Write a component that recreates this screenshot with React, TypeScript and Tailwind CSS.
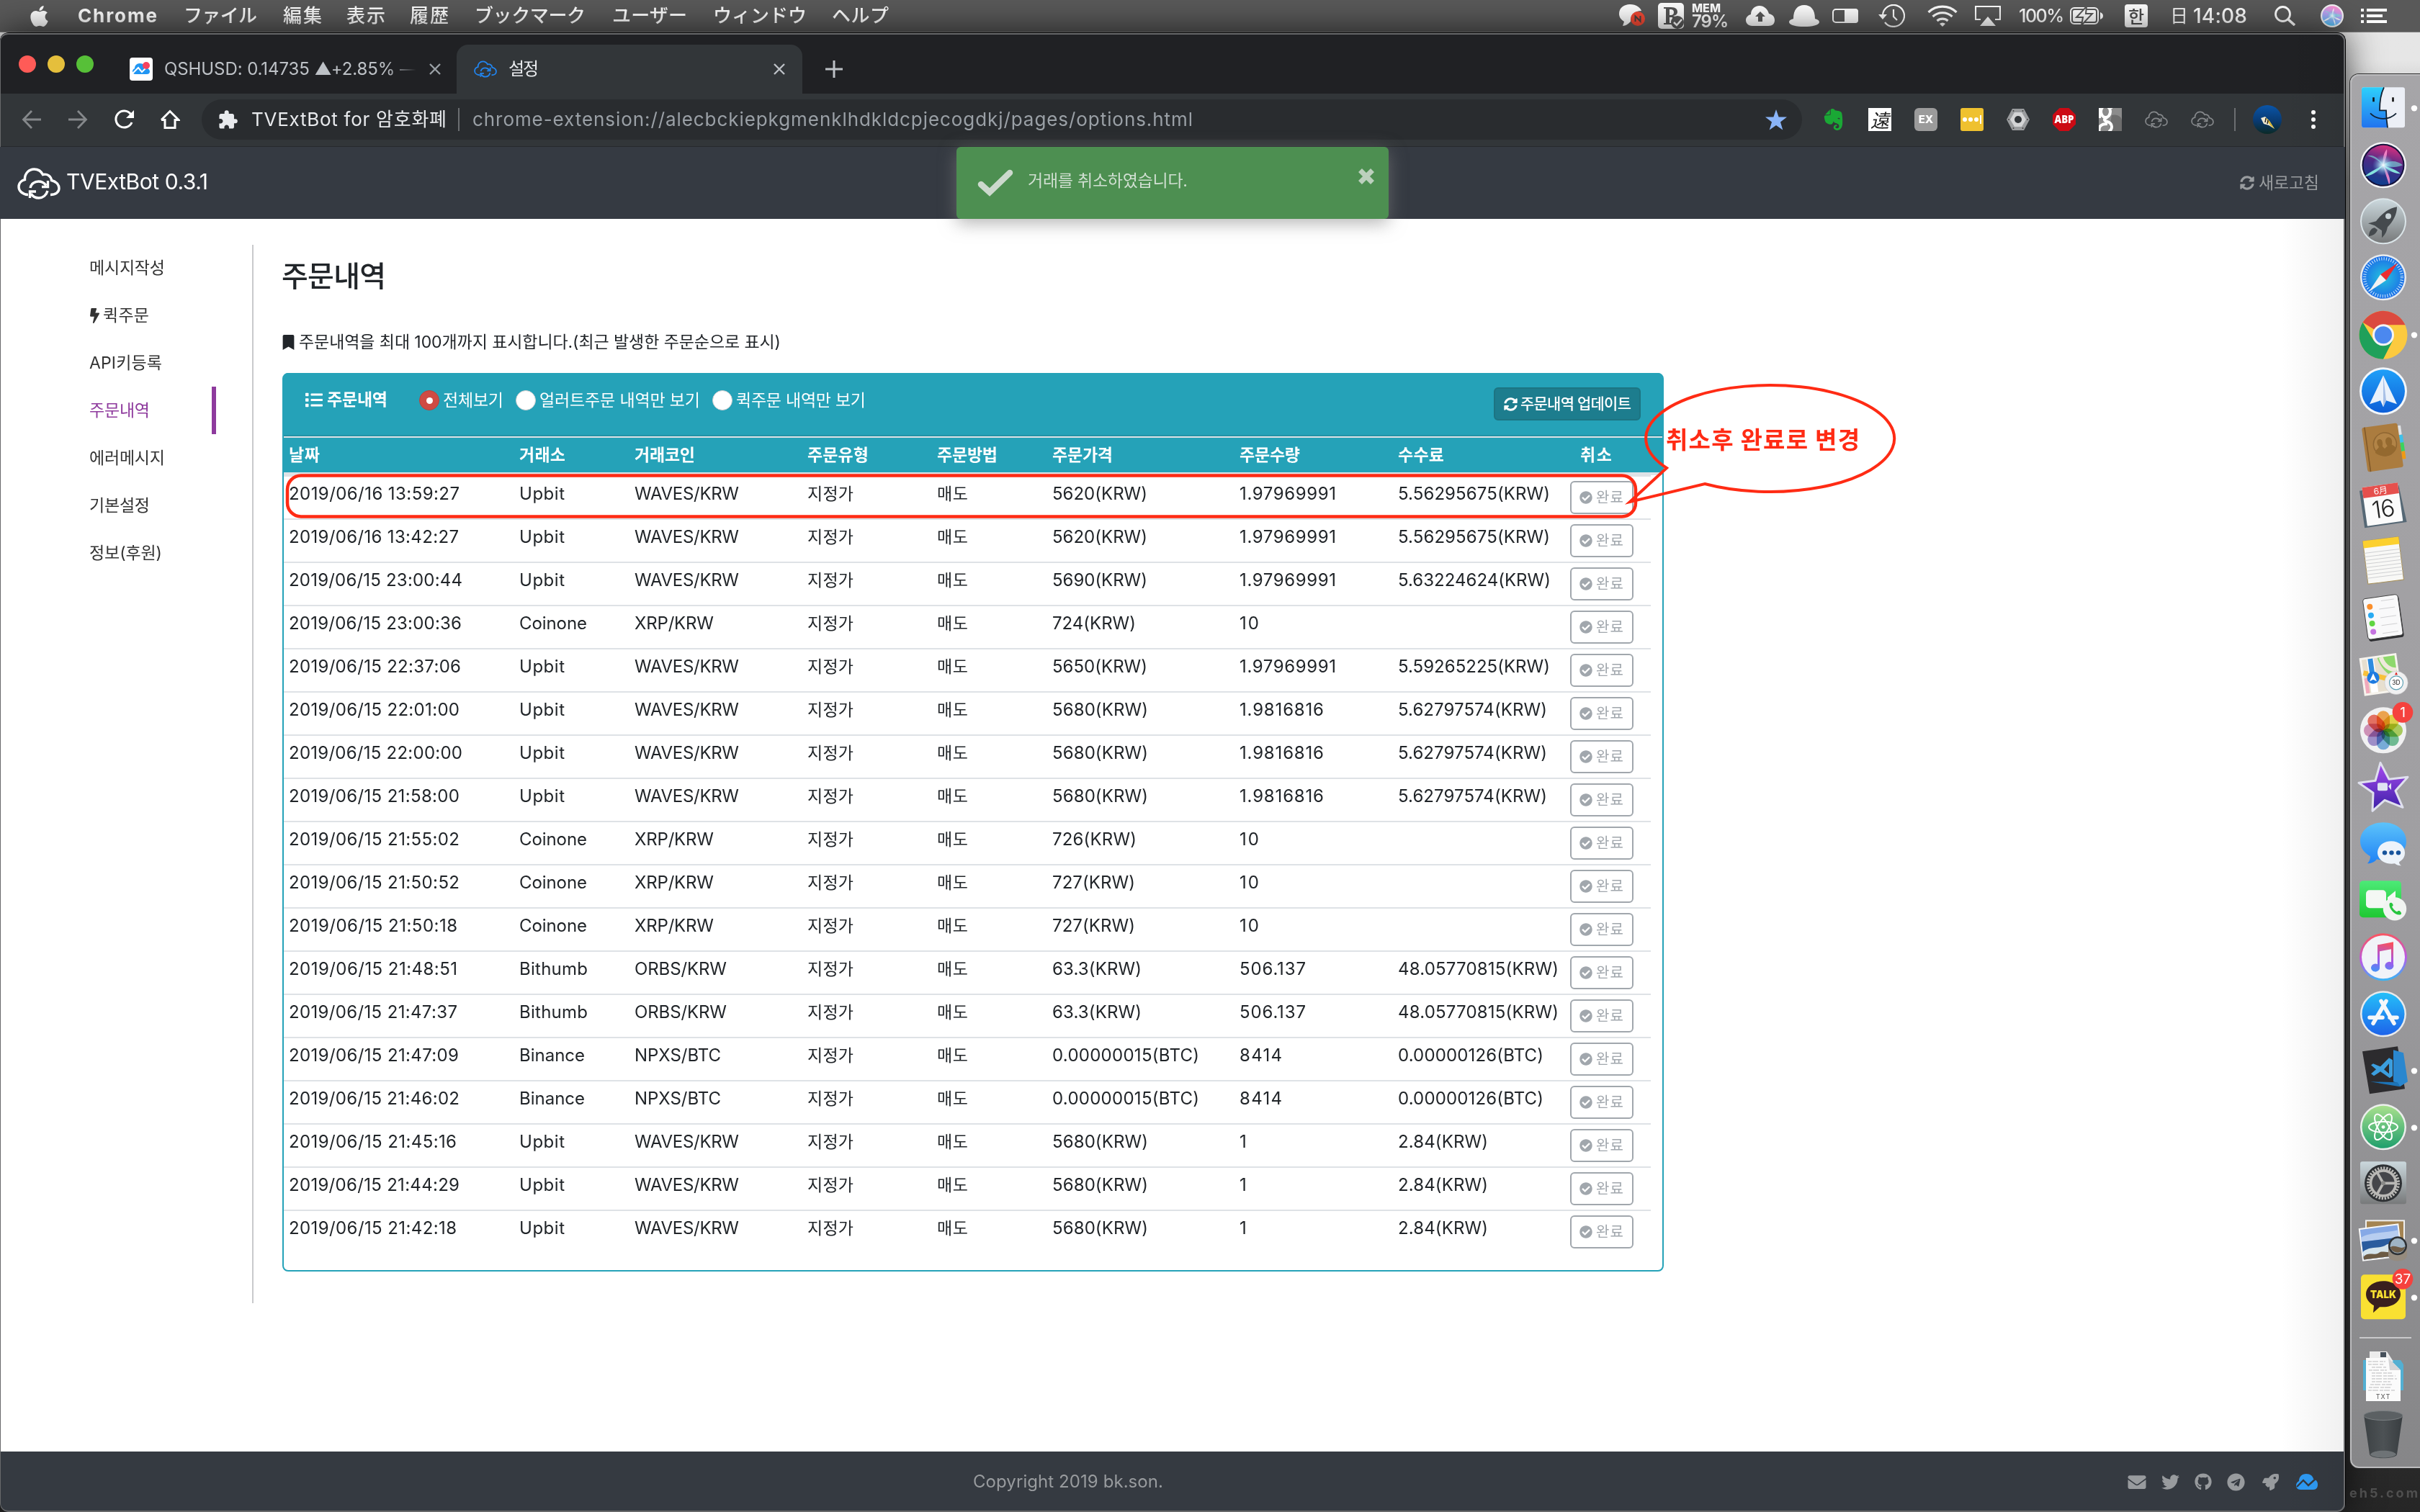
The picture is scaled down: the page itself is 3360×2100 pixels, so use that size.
import React, { useLayoutEffect, useRef, useState } from "react";
import {
  FaApple,
  FaBolt,
  FaBookmark,
  FaCheckCircle,
  FaEnvelope,
  FaEvernote,
  FaGithub,
  FaList,
  FaRocket,
  FaSyncAlt,
  FaTelegram,
  FaTwitter,
} from "react-icons/fa";
import { MdExtension } from "react-icons/md";

/** Text that is tracked so that its ink fills `w` pixels; one pixel on each side is the glyphs' own bearing. */
function Fit({ w, children, className = "" }: { w: number; children: string; className?: string }) {
  const ref = useRef<HTMLSpanElement>(null);
  const [spacing, setSpacing] = useState(0);
  useLayoutEffect(() => {
    const el = ref.current;
    if (!el) return;
    const natural = el.getBoundingClientRect().width;
    setSpacing((w + 2 - natural) / Math.max(1, children.length - 1));
  }, [w, children]);
  return (
    <span className={"inline-block shrink-0 -translate-x-px whitespace-pre " + className} style={{ width: w }}>
      <span ref={ref} style={{ letterSpacing: spacing }}>
        {children}
      </span>
    </span>
  );
}

function CloudLogo({ className, stroke = 2.4 }: { className: string; stroke?: number }) {
  return (
    <svg viewBox="0 0 60 44" className={className} fill="none" stroke="currentColor" strokeWidth={stroke} strokeLinecap="butt">
      <path d="M15 37.500C7 37 2 32 2 26.500C2 21 6 17.500 10.500 16.500C10 8 16 2 23.500 2C29 2 33 4.500 35.500 9.500C42 8 47 12 47.500 17.500C54 19 58 23.500 58 28.500C58 34 53 37.500 46 37.500" />
      <path d="M18 28C19 22.500 24 19 29.500 19C34 19 37.500 21 40 24.500M42.500 18V26.500H34" />
      <path d="M42 32C40.500 38 35.500 42 30 42C25.500 42 21.500 40 19 36M17.500 42V33H26" />
    </svg>
  );
}

function SiriBall({ id, light }: { id: string; light?: boolean }) {
  return (
    <g>
      <defs>
        <linearGradient id={id + "a"} x1="0.6" y1="0" x2="0.35" y2="1">
          <stop offset="0" stopColor={light ? "#ff8fd0" : "#d8307f"} />
          <stop offset="0.45" stopColor={light ? "#b9a3f5" : "#4a2a86"} />
          <stop offset="1" stopColor={light ? "#4cc3f7" : "#0d3f8e"} />
        </linearGradient>
        <radialGradient id={id + "b"}>
          <stop offset="0" stopColor="#fff" />
          <stop offset="0.3" stopColor="#bff6ff" stopOpacity="0.75" />
          <stop offset="1" stopColor="#5ad" stopOpacity="0" />
        </radialGradient>
      </defs>
      <circle r="32" fill="#f4f4f6" />
      <circle r="29.500" fill={light ? "#f4f4f6" : "#15123c"} />
      <circle r="27.500" fill={`url(#${id}a)`} />
      <path d="M0 0C-10 -14 -16 -14 -22 -13C-12 -10 -6 -6 0 0C8 -8 20 -6 27 0C18 4 10 3 0 0Z" fill="#7fe6e0" opacity="0.6" />
      <path d="M0 0C-6 4 -18 8 -26 16C-14 14 -6 8 0 0C8 4 18 6 24 12C16 12 6 8 0 0Z" fill={light ? "#fff" : "#8ff5e4"} opacity="0.9" />
      <path d="M0 0C2 10 6 20 8 27C12 22 6 8 0 0C4 -8 6 -16 5 -22C0 -16 -1 -8 0 0Z" fill={light ? "#fff" : "#ff8fd0"} opacity="0.85" />
      <circle r="15" fill={`url(#${id}b)`} />
    </g>
  );
}

const MENUS: [string, number, string][] = [
  ["ファイル", 100, "ml-[39px]"],
  ["編集", 52, "ml-[38px]"],
  ["表示", 52, "ml-[36px]"],
  ["履歴", 52, "ml-[36px]"],
  ["ブックマーク", 152, "ml-[38px]"],
  ["ユーザー", 102, "ml-[39px]"],
  ["ウィンドウ", 128, "ml-[38px]"],
  ["ヘルプ", 77, "ml-[37px]"],
];

function MenuBar() {
  return (
    <header className="flex h-[44px] shrink-0 items-center bg-[#595959] font-['Inter','Noto_Sans_CJK_JP',sans-serif] text-[26px] leading-[44px] text-white">
      <div className="flex w-[2248px] items-center">
        <FaApple className="ml-[39px] h-[33px] w-[31px]" />
        <Fit w={108} className="ml-[39px] font-bold">Chrome</Fit>
        {MENUS.map(([t, w, m]) => (
          <Fit key={t} w={w} className={"font-medium " + m}>{t}</Fit>
        ))}
      </div>
      <svg viewBox="0 0 36 32" className="h-[32px] w-[36px]">
        <path d="M15 0C24 0 30 5 31 9C22 9 15 15 16 24C13 27 9 30 5 30L7 24C2 21 0 17 0 13C0 5 7 0 15 0Z" fill="#fff" />
        <circle cx="26" cy="20" r="10" fill="#f44a35" />
        <path d="M22.500 24V16.500L29.500 23.500V16" fill="none" stroke="#444" strokeWidth="2" />
      </svg>
      <svg viewBox="0 0 36 36" className="ml-[18px] h-[36px] w-[36px]">
        <rect width="36" height="36" rx="5" fill="#fff" />
        <path d="M8 6H18C25 6 27 9 27 12.500C27 16 24 17.500 21 18C25 19 27 21 27 24V30H8V28H11V8H8ZM16 9V17H18C21 17 22 15 22 13C22 10 20 9 18 9ZM16 20V28H20V20Z" fill="#555" />
        <circle cx="27" cy="27" r="9" fill="#595959" />
        <path d="M22 27L26 31L33 23" fill="none" stroke="#fff" strokeWidth="2.500" />
      </svg>
      <div className="ml-[12px] flex flex-col">
        <Fit w={38} className="text-[16px] leading-[15px] font-extrabold">MEM</Fit>
        <Fit w={49} className="text-[24px] leading-[21px] font-semibold">79%</Fit>
      </div>
      <svg viewBox="0 0 40 28" className="ml-[25px] h-[28px] w-[40px]">
        <path d="M9 28C3 28 0 24 0 20C0 16 3 13 7 12C7 5 12 0 19 0C25 0 30 4 32 11C37 12 40 15 40 20C40 25 37 28 31 28Z" fill="#fff" />
        <path d="M20 8L27 15H23V22H17V15H13Z" fill="#595959" />
      </svg>
      <svg viewBox="0 0 42 30" className="ml-[20px] h-[30px] w-[42px]">
        <path d="M21 0C30 0 36 6 36 19C39 20 42 21 42 24C41 28 32 30 21 30S1 28 0 24C0 21 3 20 6 19C6 6 12 0 21 0Z" fill="#fff" />
      </svg>
      <svg viewBox="0 0 36 20" className="ml-[18px] h-[20px] w-[36px]">
        <rect x="1" y="1" width="34" height="18" rx="4" fill="none" stroke="#fff" strokeWidth="2" />
        <path d="M17 0H32A4 4 0 0 1 36 4V16A4 4 0 0 1 32 20H17Z" fill="#fff" />
      </svg>
      <svg viewBox="0 0 37 32" className="ml-[28px] h-[32px] w-[37px]" fill="none" stroke="#fff" strokeWidth="2.200">
        <path d="M6 15A15 15 0 1 1 9 25" />
        <path d="M0 14H12L6 21Z" fill="#fff" stroke="none" />
        <path d="M21 7V17L26 22" />
      </svg>
      <svg viewBox="0 0 42 30" className="ml-[31px] h-[30px] w-[42px]" fill="none" stroke="#fff" strokeWidth="3.200">
        <path d="M1.500 10A28 28 0 0 1 40.500 10M7.500 16A20 20 0 0 1 34.500 16M13.500 22A11.500 11.500 0 0 1 28.500 22" />
        <path d="M17 26A6 6 0 0 1 25 26L21 30Z" fill="#fff" stroke="none" />
      </svg>
      <svg viewBox="0 0 36 28" className="ml-[24px] h-[28px] w-[36px]">
        <path d="M8 19H1V1H35V19H28" fill="none" stroke="#fff" strokeWidth="2.200" />
        <path d="M18 15L29 28H7Z" fill="#fff" />
      </svg>
      <Fit w={61} className="ml-[26px] text-[25px] font-medium">100%</Fit>
      <svg viewBox="0 0 46 26" className="ml-[9px] h-[26px] w-[46px]">
        <rect x="1" y="2" width="38" height="22" rx="5" fill="none" stroke="#fff" strokeWidth="2" />
        <rect x="4" y="5" width="32" height="16" rx="2" fill="#fff" />
        <path d="M42 8C45 9 46 11 46 13S45 17 42 18Z" fill="#fff" />
        <path d="M23 0L9 15H18L16 26L31 10H22Z" fill="#fff" stroke="#595959" strokeWidth="2" />
      </svg>
      <span className="ml-[30px] flex h-[32px] w-[32px] items-center justify-center rounded-[4px] bg-white font-['Noto_Sans_CJK_KR',sans-serif] text-[24px] leading-[30px] font-medium text-[#4d4d4d]">한</span>
      <Fit w={19} className="ml-[32px] text-[25px]">日</Fit>
      <Fit w={73} className="ml-[13px] text-[28px] font-medium">14:08</Fit>
      <svg viewBox="0 0 29 28" className="ml-[39px] h-[28px] w-[29px]" fill="none" stroke="#fff" strokeWidth="2.800">
        <circle cx="11.500" cy="11.500" r="10" />
        <path d="M18.500 18.500L28 27" strokeWidth="3.600" />
      </svg>
      <svg viewBox="-32 -32 64 64" className="ml-[35px] h-[32px] w-[32px]">
        <SiriBall id="menusiri" light />
      </svg>
      <svg viewBox="0 0 36 20" className="ml-[24px] h-[20px] w-[36px]" fill="#fff">
        <path d="M0 0H4V4H0ZM8 0H36V4H8ZM0 8H4V12H0ZM8 8H30V12H8ZM0 16H4V20H0ZM8 16H36V20H8Z" />
      </svg>
    </header>
  );
}

function CrossIcon({ className }: { className: string }) {
  return (
    <svg viewBox="0 0 16 16" className={"h-[16px] w-[16px] shrink-0 " + className} stroke="currentColor" strokeWidth="2.400" fill="none">
      <path d="M1 1L15 15M15 1L1 15" />
    </svg>
  );
}

function TabStrip() {
  return (
    <div className="flex h-[84px] items-end bg-[#202124] font-['Inter','Noto_Sans_CJK_KR',sans-serif]">
      <div className="flex h-[68px] w-[634px] items-center">
        <div className="mb-[14px] ml-[26px] flex gap-[16px]">
          <i className="h-[24px] w-[24px] rounded-full bg-[#ff5b57]" />
          <i className="h-[24px] w-[24px] rounded-full bg-[#e5bf3c]" />
          <i className="h-[24px] w-[24px] rounded-full bg-[#57c038]" />
        </div>
        <svg viewBox="0 0 32 32" className="ml-[50px] h-[32px] w-[32px]">
          <rect width="32" height="32" rx="4" fill="#fff" />
          <path d="M8 23C5 23 4 21 4 19S5 16 7 15C7 11 10 8 14 8C19 8 22 11 23 14C26 15 28 17 28 19.500C28 22 26 23 24 23Z" fill="#2196f3" />
          <path d="M4 22L12 14L17 20L24 13" fill="none" stroke="#fff" strokeWidth="2" />
          <circle cx="23" cy="11" r="5" fill="#f6435f" />
        </svg>
        <span className="ml-[17px] flex [mask-image:linear-gradient(to_right,black_88%,transparent)]">
          <Fit w={349} className="text-[24px] leading-[32px] text-[#bdc1c6]">QSHUSD: 0.14735 ▲+2.85% —</Fit>
        </span>
        <CrossIcon className="ml-[18px] text-[#9aa0a6]" />
      </div>
      <div className="flex h-[68px] w-[480px] items-center rounded-t-[16px] bg-[#323639]">
        <CloudLogo className="ml-[24px] h-[24px] w-[32px] text-[#2185f0]" stroke={3.4} />
        <Fit w={40} className="ml-[17px] text-[24px] leading-[32px] text-[#e8eaed]">설정</Fit>
        <CrossIcon className="ml-[327px] text-[#bdc1c6]" />
      </div>
      <svg viewBox="0 0 24 24" className="mb-[22px] ml-[32px] h-[24px] w-[24px]" stroke="#bdc1c6" strokeWidth="3">
        <path d="M12 0V24M0 12H24" />
      </svg>
    </div>
  );
}

function Toolbar() {
  return (
    <div className="flex h-[74px] items-center border-b border-[#26292c] bg-[#323639] pb-[1px] font-['Inter','Noto_Sans_CJK_KR',sans-serif]">
      <svg viewBox="0 0 28 28" className="ml-[30px] h-[28px] w-[28px]" fill="none" stroke="#85888b" strokeWidth="2.800">
        <path d="M27 14H3M14 2L2.500 14L14 26" />
      </svg>
      <svg viewBox="0 0 28 28" className="ml-[36px] h-[28px] w-[28px]" fill="none" stroke="#85888b" strokeWidth="2.800">
        <path d="M1 14H25M14 2L25.500 14L14 26" />
      </svg>
      <svg viewBox="0 0 28 28" className="ml-[37px] h-[28px] w-[28px]" fill="none" stroke="#fff" strokeWidth="3">
        <path d="M24 18A11.500 11.500 0 1 1 22.500 6.500" />
        <path d="M27 1V12H16Z" fill="#fff" stroke="none" />
      </svg>
      <svg viewBox="0 0 28 28" className="ml-[35px] h-[28px] w-[28px]" fill="none" stroke="#fff" strokeWidth="3">
        <path d="M7 13V25.500H21V13M2 14.500L14 2.500L26 14.500H20M8 14.500H2" />
      </svg>
      <div className="ml-[30px] flex h-[56px] w-[2222px] items-center rounded-full bg-[#292c2f]">
        <MdExtension className="ml-[22px] h-[29px] w-[29px] text-[#e8eaed]" />
        <Fit w={269} className="ml-[19px] text-[26px] leading-[40px] text-[#e8eaed]">TVExtBot for 암호화폐</Fit>
        <i className="ml-[17px] h-[32px] w-[2px] bg-[#6b6e71]" />
        <Fit w={998} className="ml-[19px] text-[26px] leading-[40px] text-[#9aa0a6]">chrome-extension://alecbckiepkgmenklhdkldcpjecogdkj/pages/options.html</Fit>
        <svg viewBox="0 0 30 29" className="mr-[21px] ml-auto h-[29px] w-[30px]" fill="#8ab4f8">
          <path d="M15 0L18.600 10.600H30L21 17.400L24.300 28.500L15 22L5.700 28.500L9 17.400L0 10.600H11.400Z" />
        </svg>
      </div>
      <FaEvernote className="ml-[28px] h-[34px] w-[31px] text-[#1aa835]" />
      <span className="ml-[33px] flex h-[32px] w-[32px] items-center justify-center bg-white font-['Noto_Sans_CJK_JP',sans-serif] text-[26px] leading-[32px] text-[#222] italic">遠</span>
      <span className="ml-[32px] flex h-[32px] w-[32px] items-center justify-center rounded-[6px] bg-[#9b9b9b] text-[15px] font-extrabold text-white">EX</span>
      <span className="ml-[32px] flex h-[32px] w-[32px] items-center justify-center gap-[2px] rounded-[3px] bg-[#efc12f]">
        <i className="h-[6px] w-[6px] rounded-full bg-white" />
        <i className="h-[6px] w-[6px] rounded-full bg-white" />
        <i className="h-[6px] w-[6px] rounded-full bg-white" />
        <i className="h-[12px] w-[2px] bg-white" />
      </span>
      <svg viewBox="0 0 32 30" className="ml-[32px] h-[30px] w-[32px]">
        <path d="M8 0H24L32 15L24 30H8L0 15Z" fill="#9a9c9e" />
        <path d="M11 5H21L27 15L21 25H11L5 15Z" fill="#d3d4d5" />
        <circle cx="16" cy="15" r="5" fill="#323639" />
        <g fill="#444">
          <circle cx="9.500" cy="3" r="1" /><circle cx="22.500" cy="3" r="1" /><circle cx="3" cy="15" r="1" /><circle cx="29" cy="15" r="1" /><circle cx="9.500" cy="27" r="1" /><circle cx="22.500" cy="27" r="1" />
        </g>
      </svg>
      <svg viewBox="0 0 32 32" className="ml-[32px] h-[32px] w-[32px]">
        <path d="M9.500 0H22.500L32 9.500V22.500L22.500 32H9.500L0 22.500V9.500Z" fill="#cc0a14" />
        <text x="16" y="21" fontSize="15" fontWeight="800" fill="#fff" textAnchor="middle" fontFamily="Open Sans" textLength="27" lengthAdjust="spacingAndGlyphs">ABP</text>
      </svg>
      <svg viewBox="0 0 32 32" className="ml-[32px] h-[32px] w-[32px]">
        <rect width="32" height="32" fill="#8b8b8b" />
        <path d="M18 10C26 8 32 12 32 18V32H14Z" fill="#6d6d6d" />
        <g fill="none" stroke="#fff" strokeWidth="4">
          <ellipse cx="9.500" cy="5" rx="6.500" ry="8" />
          <path d="M12 13C6 15 7 18 12 19C19 21 20 29 14 33M1 33C-1 26 3 22 12 22" />
          <path d="M12 -1H19" />
        </g>
        <path d="M0 0H3V14H0Z" fill="#fff" />
      </svg>
      <CloudLogo className="ml-[32px] h-[24px] w-[32px] text-[#85888b]" stroke={3.2} />
      <CloudLogo className="ml-[32px] h-[24px] w-[32px] text-[#85888b]" stroke={3.2} />
      <i className="ml-[28px] h-[32px] w-[2px] bg-[#6b6e71]" />
      <svg viewBox="0 0 40 40" className="ml-[24px] h-[40px] w-[40px]">
        <defs>
          <linearGradient id="sea" x1="0" y1="0" x2="0" y2="1">
            <stop offset="0" stopColor="#0a55a8" />
            <stop offset="0.550" stopColor="#093a72" />
            <stop offset="1" stopColor="#0b2a26" />
          </linearGradient>
        </defs>
        <circle cx="20" cy="20" r="20" fill="url(#sea)" />
        <path d="M11 18L17 16L23 22L30 33L22 28L15 26Z" fill="#efe9d2" />
        <path d="M17 17L23 22L30 33L24 28Z" fill="#d9b62c" />
        <path d="M18 18L17 24M21 21L20 26" stroke="#222" strokeWidth="1.500" />
      </svg>
      <div className="ml-[41px] flex flex-col gap-[4px]">
        <i className="h-[6px] w-[6px] rounded-full bg-white" />
        <i className="h-[6px] w-[6px] rounded-full bg-white" />
        <i className="h-[6px] w-[6px] rounded-full bg-white" />
      </div>
    </div>
  );
}

function AppHeader() {
  return (
    <div className="relative z-10 flex h-[100px] items-center bg-[#353a42]">
      <CloudLogo className="ml-[24px] h-[44px] w-[60px] translate-y-[1px] text-white" stroke={3.4} />
      <Fit w={195} className="ml-[9px] pb-[4px] text-[30px] leading-[40px] text-white">TVExtBot 0.3.1</Fit>
      <FaSyncAlt className="ml-auto h-[20px] w-[20px] text-[#999c9f]" />
      <Fit w={82} className="mr-[37px] ml-[7px] text-[23px] leading-[32px] text-[#999c9f]">새로고침</Fit>
      <div className="absolute top-0 left-[1328px] flex h-[100px] w-[600px] rounded-[6px] bg-[#4d8f51] shadow-[0_6px_24px_rgba(130,130,130,0.6)]">
        <svg viewBox="0 0 50 38" className="mt-[31px] ml-[29px] h-[38px] w-[50px]" fill="none" stroke="#ccd9cd" strokeWidth="8.500" strokeLinecap="round">
          <path d="M5 21L17 32L45 5" />
        </svg>
        <Fit w={220} className="mt-[27px] ml-[21px] text-[23px] leading-[40px] text-[#d0dfd1]">거래를 취소하였습니다.</Fit>
        <svg viewBox="0 0 24 24" className="mt-[29px] mr-[19px] ml-auto h-[24px] w-[24px]" stroke="#bcd0bd" strokeWidth="7">
          <path d="M3.500 3.500L20.500 20.500M20.500 3.500L3.500 20.500" />
        </svg>
      </div>
    </div>
  );
}

const NAV: [string, number][] = [
  ["메시지작성", 103],
  ["퀵주문", 62],
  ["API키등록", 99],
  ["주문내역", 82],
  ["에러메시지", 103],
  ["기본설정", 82],
  ["정보(후원)", 99],
];

function SideNav() {
  return (
    <aside className="mt-[36px] h-[1470px] w-[352px] shrink-0 border-r-2 border-[#c9cacc]">
      <nav className="-mt-[1px] flex w-[300px] flex-col">
        {NAV.map(([label, w], i) => (
          <a
            key={label}
            className={
              "flex h-[66px] items-center border-r-[6px] pl-[125px] text-[23px] leading-[32px] " +
              (i === 3 ? "border-[#8e3a9d] text-[#8e3a9d]" : "border-transparent text-[#333]")
            }
          >
            {i === 1 && <FaBolt className="mr-[6px] h-[21px] w-[13px]" />}
            <Fit w={w}>{label}</Fit>
          </a>
        ))}
      </nav>
    </aside>
  );
}

const GRID = "grid grid-cols-[320px_160px_240px_180px_160px_260px_220px_239px_1fr]";

const HEAD: [string, number][] = [
  ["날짜", 41],
  ["거래소", 62],
  ["거래코인", 82],
  ["주문유형", 83],
  ["주문방법", 82],
  ["주문가격", 82],
  ["주문수량", 82],
  ["수수료", 62],
];

type Order = [date: string, exchange: string, coin: string, price: string, amount: string, fee: string];

const ORDERS: Order[] = [
  ["2019/06/16 13:59:27", "Upbit", "WAVES/KRW", "5620(KRW)", "1.97969991", "5.56295675(KRW)"],
  ["2019/06/16 13:42:27", "Upbit", "WAVES/KRW", "5620(KRW)", "1.97969991", "5.56295675(KRW)"],
  ["2019/06/15 23:00:44", "Upbit", "WAVES/KRW", "5690(KRW)", "1.97969991", "5.63224624(KRW)"],
  ["2019/06/15 23:00:36", "Coinone", "XRP/KRW", "724(KRW)", "10", ""],
  ["2019/06/15 22:37:06", "Upbit", "WAVES/KRW", "5650(KRW)", "1.97969991", "5.59265225(KRW)"],
  ["2019/06/15 22:01:00", "Upbit", "WAVES/KRW", "5680(KRW)", "1.9816816", "5.62797574(KRW)"],
  ["2019/06/15 22:00:00", "Upbit", "WAVES/KRW", "5680(KRW)", "1.9816816", "5.62797574(KRW)"],
  ["2019/06/15 21:58:00", "Upbit", "WAVES/KRW", "5680(KRW)", "1.9816816", "5.62797574(KRW)"],
  ["2019/06/15 21:55:02", "Coinone", "XRP/KRW", "726(KRW)", "10", ""],
  ["2019/06/15 21:50:52", "Coinone", "XRP/KRW", "727(KRW)", "10", ""],
  ["2019/06/15 21:50:18", "Coinone", "XRP/KRW", "727(KRW)", "10", ""],
  ["2019/06/15 21:48:51", "Bithumb", "ORBS/KRW", "63.3(KRW)", "506.137", "48.05770815(KRW)"],
  ["2019/06/15 21:47:37", "Bithumb", "ORBS/KRW", "63.3(KRW)", "506.137", "48.05770815(KRW)"],
  ["2019/06/15 21:47:09", "Binance", "NPXS/BTC", "0.00000015(BTC)", "8414", "0.00000126(BTC)"],
  ["2019/06/15 21:46:02", "Binance", "NPXS/BTC", "0.00000015(BTC)", "8414", "0.00000126(BTC)"],
  ["2019/06/15 21:45:16", "Upbit", "WAVES/KRW", "5680(KRW)", "1", "2.84(KRW)"],
  ["2019/06/15 21:44:29", "Upbit", "WAVES/KRW", "5680(KRW)", "1", "2.84(KRW)"],
  ["2019/06/15 21:42:18", "Upbit", "WAVES/KRW", "5680(KRW)", "1", "2.84(KRW)"],
];

/** Printed widths of the cell values. */
const WIDTHS: Record<string, number> = {
  Upbit: 61, Coinone: 92, Bithumb: 93, Binance: 89,
  "WAVES/KRW": 143, "XRP/KRW": 108, "ORBS/KRW": 126, "NPXS/BTC": 118,
  "5620(KRW)": 130, "5690(KRW)": 130, "5650(KRW)": 130, "5680(KRW)": 131,
  "724(KRW)": 114, "726(KRW)": 115, "727(KRW)": 113, "63.3(KRW)": 122, "0.00000015(BTC)": 202,
  "1.97969991": 132, "1.9816816": 115, "10": 25, "506.137": 90, "8414": 57, "1": 9,
  "5.56295675(KRW)": 209, "5.63224624(KRW)": 210, "5.59265225(KRW)": 209, "5.62797574(KRW)": 205,
  "48.05770815(KRW)": 221, "0.00000126(BTC)": 200, "2.84(KRW)": 123,
  "2019/06/16 13:59:27": 235, "2019/06/16 13:42:27": 234, "2019/06/15 23:00:44": 239, "2019/06/15 23:00:36": 238,
  "2019/06/15 22:37:06": 237, "2019/06/15 22:01:00": 235, "2019/06/15 22:00:00": 239, "2019/06/15 21:58:00": 235,
  "2019/06/15 21:55:02": 235, "2019/06/15 21:50:52": 235, "2019/06/15 21:50:18": 232, "2019/06/15 21:48:51": 232,
  "2019/06/15 21:47:37": 232, "2019/06/15 21:47:09": 234, "2019/06/15 21:46:02": 235, "2019/06/15 21:45:16": 231,
  "2019/06/15 21:44:29": 235, "2019/06/15 21:42:18": 231,
};

function Cell({ v }: { v: string }) {
  return <span className="pt-[9px]">{v && <Fit w={WIDTHS[v]}>{v}</Fit>}</span>;
}

function Radio({ label, w, on, className }: { label: string; w: number; on?: boolean; className: string }) {
  return (
    <label className={"flex items-center " + className}>
      <i className={"flex h-[28px] w-[28px] items-center justify-center rounded-full border " + (on ? "border-[#b9433c] bg-[#cf4b44]" : "border-[#cfcfd0] bg-white")}>
        {on && <i className="h-[9px] w-[9px] rounded-full bg-white" />}
      </i>
      <Fit w={w} className="ml-[6px] text-[23px] leading-[30px]">{label}</Fit>
    </label>
  );
}

function OrdersCard() {
  return (
    <section className="mt-[28px] h-[1248px] w-[1918px] rounded-[8px] border-2 border-[#25a2b8] bg-white">
      <div className="-mt-[2px] flex h-[88px] items-start rounded-t-[6px] border-b-2 border-[#2192a5] bg-[#25a2b8] text-white">
        <FaList className="mt-[25px] ml-[30px] h-[25px] w-[24px]" />
        <Fit w={82} className="mt-[22px] ml-[7px] text-[23px] leading-[30px] font-bold">주문내역</Fit>
        <Radio label="전체보기" w={82} on className="mt-[23px] ml-[45px]" />
        <Radio label="얼러트주문 내역만 보기" w={221} className="mt-[23px] ml-[18px]" />
        <Radio label="퀵주문 내역만 보기" w={178} className="mt-[23px] ml-[18px]" />
        <button className="mt-[20px] mr-[30px] ml-auto flex h-[46px] w-[204px] items-center rounded-[6px] border-2 border-[#1c7482] bg-[#1d7d8e]">
          <FaSyncAlt className="ml-[12px] h-[19px] w-[19px]" />
          <Fit w={152} className="ml-[5px] text-[21px] leading-[30px] font-medium">주문내역 업데이트</Fit>
        </button>
      </div>
      <div className={GRID + " h-[54px] items-center border-t-2 border-b-4 border-[#dee2e6] bg-[#25a2b8] pl-[8px] text-[23px] leading-[30px] font-bold text-white"}>
        {HEAD.map(([t, w]) => (
          <Fit key={t} w={w}>{t}</Fit>
        ))}
        <Fit w={42} className="ml-[14px]">취소</Fit>
      </div>
      <div className="w-[1898px] text-[24px] leading-[30px] text-[#212529]">
        {ORDERS.map((o) => (
          <div key={o[0]} className={GRID + " h-[60px] items-start border-t-2 border-[#dee2e6] pl-[8px]"}>
            <Cell v={o[0]} />
            <Cell v={o[1]} />
            <Cell v={o[2]} />
            <span className="pt-[9px] text-[23px]"><Fit w={62}>지정가</Fit></span>
            <span className="pt-[9px] text-[23px]"><Fit w={41}>매도</Fit></span>
            <Cell v={o[3]} />
            <Cell v={o[4]} />
            <Cell v={o[5]} />
            <button className="mt-[6px] -ml-[1px] flex h-[46px] w-[88px] items-center rounded-[6px] border-2 border-[#a1a7ad] text-[#a1a7ad]">
              <FaCheckCircle className="ml-[11px] h-[18px] w-[18px]" />
              <Fit w={36} className="ml-[6px] text-[20px] leading-[30px]">완료</Fit>
            </button>
          </div>
        ))}
      </div>
    </section>
  );
}

/** Hand-placed markup over the order table. */
function Annotation() {
  return (
    <div className="pointer-events-none absolute top-[531px] left-[396px] h-[192px] w-[2240px] text-[#ff2b14]">
      <svg viewBox="396 531 2240 192" className="h-[192px] w-[2240px]" fill="none" stroke="currentColor" strokeWidth="4.500">
        <rect x="399" y="660.500" width="1872" height="57" rx="19" />
        <path d="M2314 650L2263 697L2367 672A172.500 74 0 1 0 2314 650Z" strokeWidth="4" />
      </svg>
      <span className="absolute top-[58px] left-[1918px] font-['Noto_Sans_CJK_KR',sans-serif] leading-[40px]">
        <Fit w={267} className="text-[33px] font-bold">취소후 완료로 변경</Fit>
      </span>
    </div>
  );
}

function Footer() {
  return (
    <footer className="flex h-[84px] items-center bg-[#353a41] text-[#989b9e]">
      <Fit w={262} className="ml-[1352px] text-[24px] leading-[32px]">Copyright 2019 bk.son.</Fit>
      <FaEnvelope className="ml-[1340px] h-[25px] w-[26px]" />
      <FaTwitter className="ml-[21px] h-[25px] w-[25px]" />
      <FaGithub className="ml-[21px] h-[24px] w-[24px]" />
      <FaTelegram className="ml-[21px] h-[25px] w-[25px]" />
      <FaRocket className="ml-[24px] h-[23px] w-[23px]" />
      <svg viewBox="0 3 32 24" className="ml-[23px] h-[24px] w-[32px]">
        <path d="M7 26C3 26 1 23 1 20C1 17 3 15 5 14C5 8 9 4 15 4C21 4 24 7 25 11C29 12 31 15 31 19C31 23 29 26 25 26Z" fill="#2e9bf5" />
        <path d="M2 22L11 13L18 20L29 10" fill="none" stroke="#353a41" strokeWidth="2.400" />
      </svg>
    </footer>
  );
}

function Badge({ children }: { children: string }) {
  return (
    <g>
      <circle cx="27" cy="-25" r="14.300" fill="#f5423e" />
      <text x="27" y="-18" fontSize="19" fill="#fff" textAnchor="middle" fontFamily="Inter">{children}</text>
    </g>
  );
}

const PETALS: [string, number][] = [
  ["#f9a13a", 0], ["#e9d833", 45], ["#a8d14d", 90], ["#63bd8c", 135],
  ["#6cabe0", 180], ["#9a86cc", 225], ["#d48bb8", 270], ["#ee6352", 315],
];

const DOCK: { icon: React.ReactNode; running?: boolean }[] = [
  {
    running: true,
    icon: (
      <g>
        <rect x="-30" y="-28" width="60" height="56" rx="3" fill="#eceff6" />
        <path d="M-27 -28H1C-4 -18 -5 -6 -5 4H4C4 14 5 22 6 28H-27A3 3 0 0 1 -30 25V-25A3 3 0 0 1 -27 -28Z" fill="url(#finder)" />
        <path d="M1 -28C-4 -18 -5 -6 -5 4H4C4 14 5 22 6 28M-18 8C-8 18 8 18 18 8" fill="none" stroke="#123" strokeWidth="1.800" />
        <path d="M-13.500 -14V-8M13.500 -14V-8" stroke="#111" strokeWidth="2.600" />
      </g>
    ),
  },
  { icon: <g transform="translate(0 1)"><SiriBall id="docksiri" /></g> },
  {
    icon: (
      <g transform="translate(0 1)">
        <circle r="32" fill="#dbe5e9" />
        <circle r="30" fill="url(#steel)" />
        <path d="M19 -20C6 -18 -4 -8 -10 0L-21 3L-12 6L-2 13L-2 23C4 18 5 12 6 8C14 0 19 -10 19 -20Z" fill="#454a4e" />
        <path d="M-12 9C-18 10 -20 16 -20 21C-15 20 -10 18 -8 12Z" fill="#454a4e" />
        <circle cx="7" cy="-7" r="4" fill="#c9d3d7" />
      </g>
    ),
  },
  {
    icon: (
      <g>
        <circle r="32" fill="#e9ecef" />
        <circle r="29.500" fill="url(#safari)" />
        <circle r="26" fill="none" stroke="#d5ecfb" strokeWidth="4.500" strokeDasharray="1 2.400" />
        <path d="M20 -20L4 4L-4 -4Z" fill="#ed2d2f" />
        <path d="M-20 20L-4 -4L4 4Z" fill="#f2f2f2" />
      </g>
    ),
  },
  {
    running: true,
    icon: (
      <g transform="translate(0 1)">
        <circle r="33.500" fill="#fcca3f" />
        <path d="M0 0L-28.500 -17.500A33.500 33.500 0 0 1 30.500 -14H0Z" fill="#db4a3f" />
        <path d="M-28.500 -17.500A33.500 33.500 0 0 0 0 33.500L13 8L-13 8Z" fill="#1fa05a" />
        <circle r="15" fill="#f4f4f4" />
        <circle r="12" fill="#4b88ef" />
      </g>
    ),
  },
  {
    icon: (
      <g transform="translate(0 1)">
        <circle r="33" fill="#f2f6fa" />
        <circle r="30" fill="url(#spark)" />
        <path d="M0 -22L19 18L4 13L0 22L-4 13L-19 18Z" fill="#eaf1fb" />
        <path d="M0 -22L4 13L0 22Z" fill="#a9c0e6" />
      </g>
    ),
  },
  {
    icon: (
      <g transform="rotate(-8)">
        <path d="M22 -27H28V-14H22Z" fill="#dfe3e6" />
        <path d="M24 -14H29V-3H24Z" fill="#3fc0ea" />
        <path d="M24 -3H29V9H24Z" fill="#3bd35e" />
        <path d="M24 9H29V20H24Z" fill="#ef9a14" />
        <rect x="-26" y="-31" width="50" height="62" rx="3" fill="#ab7c3f" />
        <path d="M-22 -31V31" stroke="#80592a" strokeWidth="1.600" />
        <circle cx="3" cy="-4" r="16" fill="#b28447" stroke="#8f6632" strokeWidth="1.500" />
        <path d="M-12 6C-11 1 -6 1 -6 -2C-9 -6 -8 -12 -4 -12C0 -12 1 -7 -1 -2C0 0 1 1 2 2C4 0 5 0 6 -1C2 -8 5 -13 9 -13C14 -12 14 -6 12 -2C16 0 17 2 17 4C12 14 -4 15 -12 6Z" fill="#94692f" />
      </g>
    ),
  },
  {
    icon: (
      <g transform="translate(0 1) rotate(-8)">
        <path d="M-30 -24H25L29 28H-30Z" fill="#566875" />
        <rect x="-26" y="-28" width="50" height="54" rx="1" fill="#fbfbfb" />
        <path d="M-26 -28H24V-13H-26Z" fill="#e5504d" />
        <text x="-1" y="-16" fontSize="12" fill="#fff" textAnchor="middle" fontFamily="Inter, Noto Sans CJK JP">6月</text>
        <text x="-1" y="17" fontSize="33" fill="#222" fontWeight="300" textAnchor="middle" fontFamily="Inter" letterSpacing="-1">16</text>
      </g>
    ),
  },
  {
    icon: (
      <g transform="rotate(-7)">
        <rect x="-25" y="-30" width="50" height="60" fill="#f8f8f6" stroke="#a8915a" strokeWidth="1" />
        <path d="M-25 -30H25V-20H-25Z" fill="#fcd02e" />
        <path d="M-25 -13H25M-25 -8H25M-25 -3H25M-25 2H25M-25 7H25M-25 12H25M-25 17H25M-25 22H25" stroke="#cfd0d2" strokeWidth="1" />
      </g>
    ),
  },
  {
    icon: (
      <g transform="rotate(-8)">
        <rect x="-24" y="-27" width="49" height="58" rx="4" fill="#2c2d30" />
        <rect x="-25" y="-29" width="49" height="57" rx="4" fill="#f9f9fa" stroke="#444" strokeWidth="1" />
        <circle cx="-16.500" cy="-17" r="4" fill="#fb8f2c" />
        <circle cx="-16.500" cy="-5" r="4" fill="#28aaf2" />
        <circle cx="-16.500" cy="6.500" r="4" fill="#5fd541" />
        <circle cx="-16.500" cy="18" r="4" fill="#c573e0" />
        <path d="M0 -23H18M-4 -12H18M-4 0H18M-4 11H18M-4 22H18" stroke="#d0d0d2" strokeWidth="1" />
      </g>
    ),
  },
  {
    icon: (
      <g>
        <g transform="translate(-4 1) rotate(-8)">
          <rect x="-26" y="-27" width="52" height="53" fill="#f7f4ee" />
          <rect x="-23" y="-24" width="46" height="47" fill="#e7dfcf" />
          <path d="M-1 -24H23V8C12 4 2 -8 -1 -24Z" fill="#8ed86c" />
          <path d="M4 -24C6 -12 14 -5 23 -4" fill="none" stroke="#efe9dc" strokeWidth="6" />
          <path d="M-23 -6L23 12" stroke="#f8c13a" strokeWidth="7" />
          <path d="M-11 -24V23" stroke="#fff" strokeWidth="10" />
          <path d="M-11 -24V0" stroke="#2d8be0" strokeWidth="7" />
          <path d="M-23 2H-18V23H-23Z" fill="#f1a9bc" />
        </g>
        <circle cx="-14" cy="5" r="8.500" fill="#1e7be0" />
        <path d="M-14 -1L-9 10L-14 7.500L-19 10Z" fill="#fff" />
        <circle cx="18" cy="12" r="16.200" fill="#f0f0f1" stroke="#c4c4c6" strokeWidth="0.600" />
        <circle cx="18" cy="12" r="9.500" fill="#fff" stroke="#5fa1b5" strokeWidth="1.200" />
        <path d="M18 -3L20 1H16Z" fill="#d22" />
        <text x="18" y="15" fontSize="8.500" fill="#222" textAnchor="middle" fontFamily="Inter">3D</text>
      </g>
    ),
  },
  {
    icon: (
      <g>
        <circle r="32" fill="#f1f1f2" />
        {PETALS.map(([c, a]) => (
          <rect key={c} x="-9" y="-27" width="18" height="27" rx="9" fill={c} opacity="0.880" transform={`rotate(${a})`} className="mix-blend-multiply" />
        ))}
        <Badge>1</Badge>
      </g>
    ),
  },
  {
    icon: (
      <g transform="translate(0 2)">
        <path d="M-4 -36L8 -13L34 -16L17 3L27 26L2 16L-15 31L-14 6L-34 -8L-11 -11Z" fill="url(#star)" stroke="#dfe0ee" strokeWidth="3" strokeLinejoin="round" />
        <rect x="-8" y="-8" width="14" height="11" rx="2" fill="#dfe2f2" />
        <path d="M7 -3L11 -8V2Z" fill="#dfe2f2" />
      </g>
    ),
  },
  {
    icon: (
      <g>
        <path d="M0 -30C18 -30 32 -19 32 -4C32 11 18 22 0 22C-3 22 -6 22 -9 21C-12 25 -17 27 -22 27C-19 24 -18 20 -18 17C-27 12 -32 5 -32 -4C-32 -19 -18 -30 0 -30Z" fill="url(#bubble)" />
        <path d="M11 -4C22 -4 30 3 30 12C30 18 27 22 22 25C22 27 23 29 25 30C21 30 18 29 16 27C2 29 -8 21 -8 12C-8 3 0 -4 11 -4Z" fill="#edf3fa" />
        <g fill="#16539c"><circle cx="2" cy="12" r="3.200" /><circle cx="11.500" cy="12" r="3.200" /><circle cx="21" cy="12" r="3.200" /></g>
      </g>
    ),
  },
  {
    icon: (
      <g>
        <rect x="-33" y="-27" width="58" height="51" rx="5" fill="url(#face)" />
        <rect x="-24" y="-14" width="28" height="25" rx="5" fill="#f4f8f4" />
        <path d="M6 -4L17 -13V0H6Z" fill="#f4f8f4" />
        <circle cx="16" cy="12" r="16.200" fill="#f1f4f1" />
        <path d="M9 4C6 10 16 22 24 20C26 19 25 17 23 15C21 14 20 15 19 16C16 15 13 11 12 9C14 8 14 7 13 5C12 3 10 3 9 4Z" fill="#27c53e" />
      </g>
    ),
  },
  {
    icon: (
      <g>
        <circle r="33" fill="url(#tunes)" />
        <circle r="30" fill="#f1f3f8" />
        <path d="M-8 -17L14 -21V10A6 5.500 0 1 1 11 7V-11L-5 -8V14A6 5.500 0 1 1 -8 10Z" fill="url(#note)" />
      </g>
    ),
  },
  {
    icon: (
      <g>
        <circle r="32" fill="#e8eaec" />
        <circle r="29.500" fill="url(#store)" />
        <path d="M4 -18L-14 13M-3 -18L15 13M-19 5H-1M9 5H19" stroke="#f5f7fa" strokeWidth="5.500" strokeLinecap="round" />
      </g>
    ),
  },
  {
    running: true,
    icon: (
      <g>
        <path d="M-29 -26L20 -33L30 26L-19 33Z" fill="#2c2b2e" />
        <path d="M14 -28L28 -24L34 16L23 23L20 18L14 16Z" fill="#2a87cf" />
        <path d="M-18 16L20 17L23 23Z" fill="#1c74b8" />
        <path d="M8 -17L13 -14V8L9 11L-4 2L-13 8L-17 5L-10 -1L-17 -7L-14 -9L-4 -5ZM8 -9L1 -1L8 5Z" fill="#3b9ede" fillRule="evenodd" />
      </g>
    ),
  },
  {
    running: true,
    icon: (
      <g>
        <circle r="32" fill="#ecefed" />
        <circle r="29.500" fill="url(#atom)" />
        <g fill="none" stroke="#fff" strokeWidth="2">
          <ellipse rx="20" ry="7.500" />
          <ellipse rx="20" ry="7.500" transform="rotate(60)" />
          <ellipse rx="20" ry="7.500" transform="rotate(120)" />
        </g>
        <circle r="2.400" fill="#fff" />
      </g>
    ),
  },
  {
    icon: (
      <g>
        <rect x="-32" y="-30" width="64" height="59" rx="3" fill="url(#steel)" />
        <circle r="26" fill="#2e3134" />
        <circle r="21" fill="none" stroke="#b9b8b5" strokeWidth="4" strokeDasharray="2.400 1.700" />
        <circle r="17.500" fill="#45464a" stroke="#b9b8b5" strokeWidth="3.600" />
        <path d="M0 0H17M0 0L-8.500 -15M0 0L-8.500 15" stroke="#b9b8b5" strokeWidth="3.600" />
        <circle r="3" fill="#8a8a88" />
      </g>
    ),
  },
  {
    running: true,
    icon: (
      <g transform="translate(0 1)">
        <rect x="-24" y="-28" width="53" height="42" fill="#a48452" stroke="#f0f0f0" strokeWidth="2" />
        <g transform="translate(-2 0) rotate(-7)">
          <rect x="-30" y="-21" width="56" height="46" fill="#f7f7f7" />
          <rect x="-28" y="-19" width="52" height="42" fill="#86a9e6" />
          <path d="M-28 -8C-14 -14 6 -10 24 -12V-2H-28Z" fill="#b7cdf0" />
          <path d="M-28 -2H24V23H-28Z" fill="#2a5c9e" />
          <path d="M-28 12C-16 4 -4 12 6 6C12 4 20 8 24 4V23H-28Z" fill="#d5e4ec" />
          <path d="M-28 19C-20 12 -14 20 -6 16C0 12 8 22 24 14V23H-28Z" fill="#6b5a44" />
        </g>
        <path d="M7 9H33V20C33 31 7 31 7 20Z" fill="#958b7e" />
        <circle cx="20" cy="7" r="13" fill="#2e3134" />
        <circle cx="20" cy="7" r="10.500" fill="#9fb4c4" />
        <path d="M10 9C16 4 24 13 30 8C29 19 12 19 10 9Z" fill="#6f5d47" />
      </g>
    ),
  },
  {
    running: true,
    icon: (
      <g>
        <rect x="-31" y="-31" width="62" height="62" rx="5" fill="#f9e032" />
        <path d="M0 -22C14 -22 24 -14 24 -4C24 6 14 14 0 14C-1 14 -3 14 -5 14L-14 22L-13 12C-20 8 -24 3 -24 -4C-24 -14 -14 -22 0 -22Z" fill="#3a1f1e" />
        <text x="0" y="2" fontSize="15" fontWeight="900" fill="#f9e032" textAnchor="middle" fontFamily="Inter" textLength="36" lengthAdjust="spacingAndGlyphs">TALK</text>
        <Badge>37</Badge>
      </g>
    ),
  },
];

function Dock() {
  return (
    <div className="absolute top-[103px] left-[3263px] flex h-[1936px] w-[110px] flex-col rounded-[12px] border-2 border-[#bcbcbe] bg-linear-to-b from-[#a6a5a8] via-[#a09fa2] via-55% to-[#868688] pt-[5px] shadow-[0_0_0_1px_#2c2c2c]">
      <svg className="absolute h-0 w-0">
        <defs>
          <linearGradient id="finder" x1="0" y1="0" x2="0" y2="1"><stop offset="0" stopColor="#2dd0fb" /><stop offset="1" stopColor="#2273ef" /></linearGradient>
          <linearGradient id="steel" x1="0" y1="0" x2="0" y2="1"><stop offset="0" stopColor="#cbd8dd" /><stop offset="1" stopColor="#77797a" /></linearGradient>
          <radialGradient id="safari"><stop offset="0" stopColor="#25c4dd" /><stop offset="1" stopColor="#1c6fe8" /></radialGradient>
          <linearGradient id="spark" x1="0" y1="0" x2="0" y2="1"><stop offset="0" stopColor="#1f9ff8" /><stop offset="1" stopColor="#0e5fd8" /></linearGradient>
          <linearGradient id="star" x1="0" y1="0" x2="0" y2="1"><stop offset="0" stopColor="#a84bf0" /><stop offset="1" stopColor="#3a1fa6" /></linearGradient>
          <linearGradient id="bubble" x1="0" y1="0" x2="0" y2="1"><stop offset="0" stopColor="#5cc3fb" /><stop offset="1" stopColor="#1f82f5" /></linearGradient>
          <linearGradient id="face" x1="0" y1="0" x2="0" y2="1"><stop offset="0" stopColor="#4cea77" /><stop offset="1" stopColor="#1fc832" /></linearGradient>
          <linearGradient id="tunes" x1="0.500" y1="0" x2="0.600" y2="1"><stop offset="0" stopColor="#fb5560" /><stop offset="0.550" stopColor="#b759e8" /><stop offset="1" stopColor="#35b9f5" /></linearGradient>
          <linearGradient id="note" x1="0.700" y1="0" x2="0.500" y2="1"><stop offset="0" stopColor="#f9505c" /><stop offset="0.600" stopColor="#a357ea" /><stop offset="1" stopColor="#4c8df6" /></linearGradient>
          <linearGradient id="store" x1="0" y1="0" x2="0" y2="1"><stop offset="0" stopColor="#25bff9" /><stop offset="1" stopColor="#1d63ea" /></linearGradient>
          <linearGradient id="atom" x1="0" y1="0" x2="0" y2="1"><stop offset="0" stopColor="#a8e08d" /><stop offset="1" stopColor="#1f9f6c" /></linearGradient>
          <linearGradient id="bin" x1="0" y1="0" x2="1" y2="0"><stop offset="0" stopColor="#3c4144" /><stop offset="0.500" stopColor="#4d5255" /><stop offset="1" stopColor="#383d40" /></linearGradient>
        </defs>
      </svg>
      {DOCK.map((d, i) => (
        <svg key={i} viewBox="-44 -39.33 96 78.66" className="h-[78.66px] w-[96px] shrink-0">
          {d.icon}
          {d.running && <circle cx="43" cy="1" r="4.200" fill="#fff" />}
        </svg>
      ))}
      <i className="mt-[17px] ml-[11px] h-[2px] w-[72px] shrink-0 bg-[#c9c9cb]" />
      <svg viewBox="-44 -36 96 72" className="mt-[18px] h-[72px] w-[96px] shrink-0">
        <path d="M-28 -24H24L28 -18V18H-28Z" fill="#53afd2" />
        <path d="M-19 -36H5L14 -22H-19Z" fill="#ececec" />
        <path d="M-4 -35H4V-28H-4Z" fill="#46505a" />
        <path d="M-24 -27H7L24 -10V33H-24Z" fill="#fbfbfb" />
        <path d="M7 -27L24 -10H9Z" fill="#d5d5d7" />
        <path d="M-21 -22H3M-21 -18H0M-16 -14H4M-20 -10H5M-16 -6H12M-16 -2H17M-16 2H19M-16 6H10M-18 10H14M-20 14H12M-21 18H16" stroke="#b9b9bb" strokeWidth="1" strokeDasharray="5 1 8 2" />
        <text x="0" y="30" fontSize="9" fill="#555" textAnchor="middle" fontFamily="Inter" letterSpacing="1">TXT</text>
      </svg>
      <svg viewBox="-44 -35 96 70" className="mt-[9px] h-[70px] w-[96px] shrink-0">
        <path d="M-27 -28L-19 27C-17 34 17 34 19 27L27 -28Z" fill="url(#bin)" />
        <ellipse cy="-27" rx="27" ry="6.500" fill="#5b6063" stroke="#7b8083" strokeWidth="1" />
        <path d="M-18 27C-14 20 14 20 18 27C15 33 -15 33 -18 27Z" fill="#6e7376" />
      </svg>
    </div>
  );
}

export default function App() {
  return (
    <div className="relative flex h-[2100px] w-[3360px] flex-col overflow-hidden bg-linear-to-b from-[#e6e6e6] from-4% via-[#8a8a8a] via-12% to-[#262626] font-['Inter','Noto_Sans_CJK_KR',sans-serif]">
      <MenuBar />
      <div className="h-px shrink-0 bg-[#808080]" />
      <div className="relative flex h-[2055px] w-[3257px] flex-col overflow-hidden rounded-[12px] bg-black pt-px pr-px shadow-[0_0_50px_rgba(0,0,0,0.7)]">
        <TabStrip />
        <Toolbar />
        <AppHeader />
        <main className="flex h-[1712px] bg-white">
          <SideNav />
          <div className="pt-[60px] pl-[40px] text-[#212529]">
            <h1 className="h-[40px] text-[40px] leading-[40px] font-medium"><Fit w={143}>주문내역</Fit></h1>
            <p className="mt-[56px] flex h-[30px] items-center text-[23px] leading-[30px]">
              <FaBookmark className="h-[21px] w-[17px]" />
              <Fit w={667} className="ml-[7px]">주문내역을 최대 100개까지 표시합니다.(최근 발생한 주문순으로 표시)</Fit>
            </p>
            <OrdersCard />
          </div>
        </main>
        <Footer />
        <div className="pointer-events-none absolute top-0 right-0 h-full w-[90px] bg-linear-to-l from-black/6 to-transparent" />
        <div className="pointer-events-none absolute inset-0 mt-px mr-px rounded-[11px] border-2 border-l border-[#68696b]" />
      </div>
      <Annotation />
      <span className="absolute top-[2060px] left-[3262px] text-[18px] font-bold tracking-[3px] text-[#6a6a6a] opacity-60">eh5.com</span>
      <Dock />
    </div>
  );
}
